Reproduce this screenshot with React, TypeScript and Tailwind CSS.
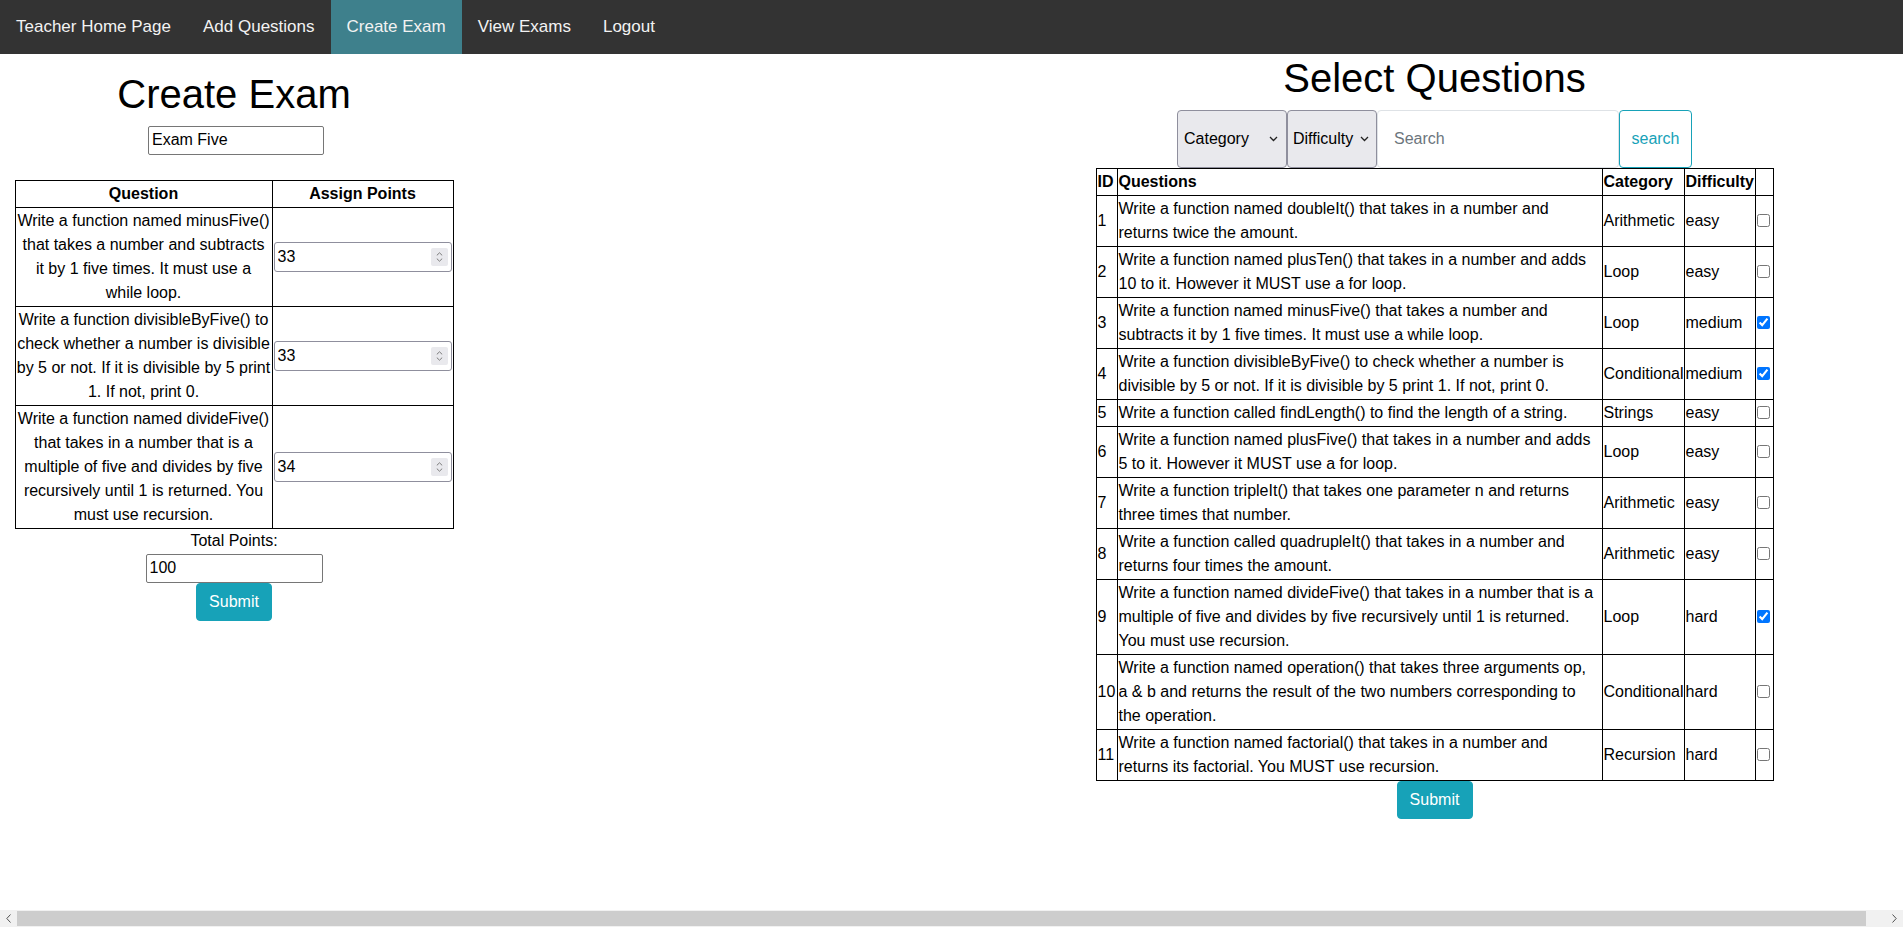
import React from "react";

const navLinks = [
  { label: "Teacher Home Page", active: false },
  { label: "Add Questions", active: false },
  { label: "Create Exam", active: true },
  { label: "View Exams", active: false },
  { label: "Logout", active: false },
];

const examQuestions = [
  {
    text: "Write a function named minusFive() that takes a number and subtracts it by 1 five times. It must use a while loop.",
    points: 33,
  },
  {
    text: "Write a function divisibleByFive() to check whether a number is divisible by 5 or not. If it is divisible by 5 print 1. If not, print 0.",
    points: 33,
  },
  {
    text: "Write a function named divideFive() that takes in a number that is a multiple of five and divides by five recursively until 1 is returned. You must use recursion.",
    points: 34,
  },
];

const bank = [
  { id: 1, text: "Write a function named doubleIt() that takes in a number and returns twice the amount.", category: "Arithmetic", difficulty: "easy", checked: false },
  { id: 2, text: "Write a function named plusTen() that takes in a number and adds 10 to it. However it MUST use a for loop.", category: "Loop", difficulty: "easy", checked: false },
  { id: 3, text: "Write a function named minusFive() that takes a number and subtracts it by 1 five times. It must use a while loop.", category: "Loop", difficulty: "medium", checked: true },
  { id: 4, text: "Write a function divisibleByFive() to check whether a number is divisible by 5 or not. If it is divisible by 5 print 1. If not, print 0.", category: "Conditional", difficulty: "medium", checked: true },
  { id: 5, text: "Write a function called findLength() to find the length of a string.", category: "Strings", difficulty: "easy", checked: false },
  { id: 6, text: "Write a function named plusFive() that takes in a number and adds 5 to it. However it MUST use a for loop.", category: "Loop", difficulty: "easy", checked: false },
  { id: 7, text: "Write a function tripleIt() that takes one parameter n and returns three times that number.", category: "Arithmetic", difficulty: "easy", checked: false },
  { id: 8, text: "Write a function called quadrupleIt() that takes in a number and returns four times the amount.", category: "Arithmetic", difficulty: "easy", checked: false },
  { id: 9, text: "Write a function named divideFive() that takes in a number that is a multiple of five and divides by five recursively until 1 is returned. You must use recursion.", category: "Loop", difficulty: "hard", checked: true },
  { id: 10, text: "Write a function named operation() that takes three arguments op, a & b and returns the result of the two numbers corresponding to the operation.", category: "Conditional", difficulty: "hard", checked: false },
  { id: 11, text: "Write a function named factorial() that takes in a number and returns its factorial. You MUST use recursion.", category: "Recursion", difficulty: "hard", checked: false },
];

function Chevron() {
  return (
    <svg width="9" height="6" viewBox="0 0 9 6" className="shrink-0">
      <path d="M1 1l3.5 3.5L8 1" fill="none" stroke="#222" strokeWidth="1.3" />
    </svg>
  );
}

// number field with the little up/down stepper on the right
function PointsInput({ value }: { value: number }) {
  return (
    <div className="flex h-[30px] w-full items-center rounded-[3px] border border-[#8f8f9d] bg-white pr-[3px] pl-[3px]">
      <input type="text" defaultValue={value} className="min-w-0 flex-1 outline-none" />
      <div className="flex h-[18px] w-[17px] flex-col items-center justify-center gap-[2px] rounded-[2px] bg-[#e9e9ed]">
        <svg width="7" height="4" viewBox="0 0 7 4">
          <path d="M0.8 3.4L3.5 0.8l2.7 2.6" fill="none" stroke="#7a7a7a" strokeWidth="1" />
        </svg>
        <svg width="7" height="4" viewBox="0 0 7 4">
          <path d="M0.8 0.6L3.5 3.2l2.7-2.6" fill="none" stroke="#7a7a7a" strokeWidth="1" />
        </svg>
      </div>
    </div>
  );
}

function SubmitButton() {
  return (
    <button
      type="button"
      className="h-[38px] w-[76px] rounded-[4px] border border-[#17a2b8] bg-[#17a2b8] text-white leading-6"
    >
      Submit
    </button>
  );
}

export default function App() {
  return (
    <div className="flex h-screen w-full flex-col overflow-hidden bg-white font-['Liberation_Sans',Arial,sans-serif] text-base leading-6 text-black">
      {/* top nav */}
      <nav className="flex bg-[#333]">
        {navLinks.map((link) => (
          <a
            key={link.label}
            href="#"
            className={
              link.active
                ? "bg-[#3e808c] px-4 py-[14px] text-[17px] leading-[25.5px] text-[#f2f2f2]"
                : "px-4 py-[14px] text-[17px] leading-[25.5px] text-[#f2f2f2]"
            }
          >
            {link.label}
          </a>
        ))}
      </nav>

      <div className="flex flex-1">
        {/* Create exam side */}
        <div className="flex w-[468px] flex-col items-center pt-4">
          <h1 className="mb-2 text-[40px] leading-[48px] font-normal">Create Exam</h1>
          <input
            type="text"
            defaultValue="Exam Five"
            className="ml-[4px] h-[29px] w-[176px] rounded-[2px] border border-[#767676] px-[3px] outline-none"
          />
          <table className="mt-[25px] w-[438px] table-fixed border-collapse border border-black">
            <colgroup>
              <col className="w-[257px]" />
              <col className="w-[181px]" />
            </colgroup>
            <thead>
              <tr>
                <th className="border border-black p-px text-center font-bold">Question</th>
                <th className="border border-black p-px text-center font-bold">Assign Points</th>
              </tr>
            </thead>
            <tbody>
              {examQuestions.map((q, i) => (
                <tr key={i}>
                  <td className="border border-black p-px text-center align-middle">{q.text}</td>
                  <td className="border border-black p-px align-middle">
                    <PointsInput value={q.points} />
                  </td>
                </tr>
              ))}
            </tbody>
          </table>
          <div>Total Points:</div>
          <input
            type="text"
            defaultValue="100"
            className="mt-px h-[29px] w-[177px] rounded-[2px] border border-[#767676] px-[3px] outline-none"
          />
          <SubmitButton />
        </div>

        {/* question bank side */}
        <div className="ml-[498px] flex w-[937px] flex-col items-center">
          <h1 className="mb-2 text-[40px] leading-[48px] font-normal">Select Questions</h1>
          <div className="flex h-[58px]">
            <div className="flex w-[110px] items-center justify-between rounded-[4px] border border-[#8f8f9d] bg-[#e9e9ed] pr-[8px] pl-[6px]">
              <span>Category</span>
              <Chevron />
            </div>
            <div className="flex w-[90px] items-center justify-between rounded-[4px] border border-[#8f8f9d] bg-[#e9e9ed] pr-[7px] pl-[5px]">
              <span>Difficulty</span>
              <Chevron />
            </div>
            <input
              type="text"
              placeholder="Search"
              className="w-[242px] rounded-[4px] border border-[#dee2e6] px-4 placeholder:text-[#6c757d] outline-none"
            />
            <button
              type="button"
              className="w-[73px] rounded-[4px] border border-[#17a2b8] bg-white text-[#17a2b8]"
            >
              search
            </button>
          </div>
          <table className="w-[677px] table-fixed border-collapse border border-black">
            <colgroup>
              <col className="w-[21px]" />
              <col className="w-[485px]" />
              <col className="w-[82px]" />
              <col className="w-[71px]" />
              <col className="w-[18px]" />
            </colgroup>
            <thead>
              <tr>
                <th className="border border-black p-px text-left font-bold">ID</th>
                <th className="border border-black p-px text-left font-bold">Questions</th>
                <th className="border border-black p-px text-left font-bold">Category</th>
                <th className="border border-black p-px text-left font-bold">Difficulty</th>
                <th className="border border-black p-px"></th>
              </tr>
            </thead>
            <tbody>
              {bank.map((q) => (
                <tr key={q.id}>
                  <td className="border border-black p-px align-middle">{q.id}</td>
                  <td className="border border-black py-px pr-[3px] pl-px align-middle">{q.text}</td>
                  <td className="border border-black p-px align-middle">{q.category}</td>
                  <td className="border border-black p-px align-middle">{q.difficulty}</td>
                  <td className="border border-black p-px align-middle">
                    <input type="checkbox" defaultChecked={q.checked} className="block h-[13px] w-[13px]" />
                  </td>
                </tr>
              ))}
            </tbody>
          </table>
          <SubmitButton />
        </div>
      </div>

      {/* horizontal page scrollbar */}
      <div className="flex h-[17px] shrink-0 items-stretch bg-[#f1f1f1]">
        <div className="flex w-[17px] items-center justify-center">
          <svg width="5" height="9" viewBox="0 0 5 9">
            <path d="M4.5 0.5L0.8 4.5l3.7 4" fill="none" stroke="#505050" strokeWidth="1" />
          </svg>
        </div>
        <div className="my-[1px] w-[1849px] bg-[#cdcdcd]" />
        <div className="flex-1" />
        <div className="flex w-[17px] items-center justify-center">
          <svg width="5" height="9" viewBox="0 0 5 9">
            <path d="M0.5 0.5l3.7 4-3.7 4" fill="none" stroke="#505050" strokeWidth="1" />
          </svg>
        </div>
      </div>
    </div>
  );
}
